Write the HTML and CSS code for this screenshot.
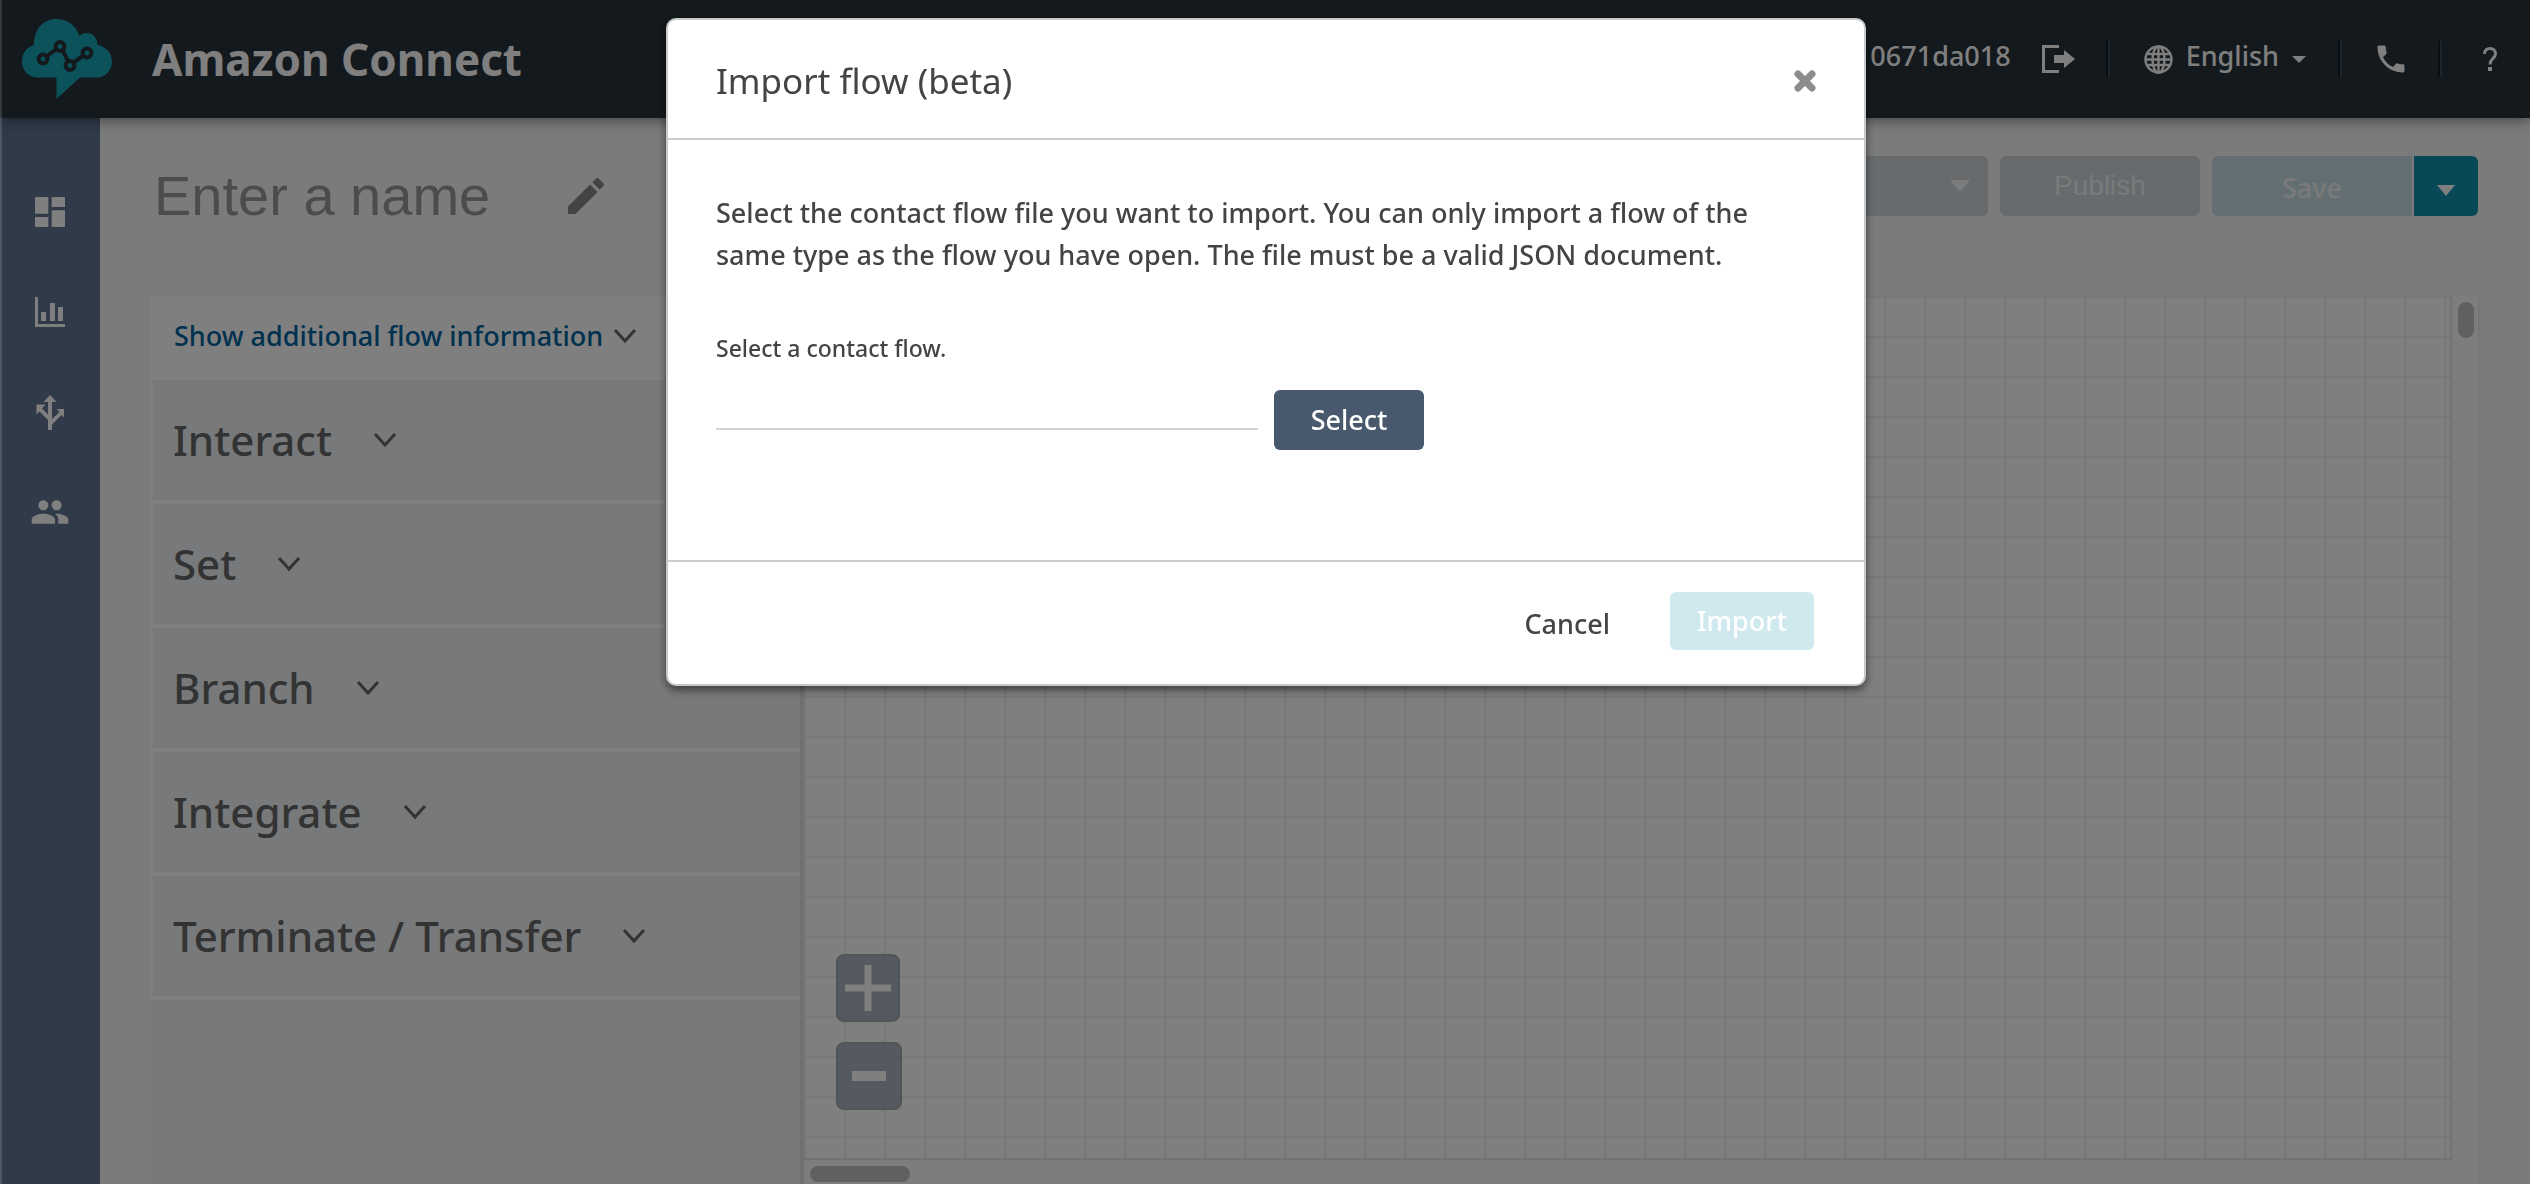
FILE: index.html
```
<!DOCTYPE html>
<html lang="en">
<head>
<meta charset="utf-8">
<title>Amazon Connect</title>
<link rel="stylesheet" href="styles.css">
</head>
<body>
<header class="topbar">
  <a class="brand" href="#">
    <svg class="brand-logo" viewBox="0 0 90 80" aria-hidden="true">
      <path fill="#18a4b4" d="M16 58.500C6 58.500 0 51 0 42.500C0 34 5 28 12 26C12 10 21 0 34.500 0C46 0 54.500 7 57.500 17C59.500 15 62 14 65 14C71 14 75 18.500 75.500 26C84 27.500 90 34 90 42.500C90 51 84 58.500 74 58.500H58L34.500 80V58.500Z"/>
      <g fill="none" stroke="#27323a" stroke-width="4">
        <path d="M24.500 37.500L34.500 30M40.500 31L46 42M51.500 43.500L61.500 36.500"/>
        <circle cx="21" cy="40" r="4.400"/><circle cx="38" cy="27.500" r="4.400"/><circle cx="48" cy="46.500" r="4.400"/><circle cx="65" cy="34" r="4.400"/>
      </g>
    </svg>
    <span class="brand-name">Amazon Connect</span>
  </a>
  <div class="top-group user">
    <span class="top-text">0671da018</span>
    <a href="#" aria-label="Log out"><svg width="33" height="28" viewBox="0 0 33 28"><path fill="none" stroke="#fff" stroke-width="3" d="M17 1.500H1.500V26.500H17"/><path fill="#fff" d="M12 10H22V5L33 14L22 23V18H12Z"/></svg></a>
  </div>
  <div class="top-group lang">
    <svg width="29" height="29" viewBox="0 0 29 29" fill="none" stroke="#fff" stroke-width="2.400"><circle cx="14.500" cy="14.500" r="13"/><ellipse cx="14.500" cy="14.500" rx="6" ry="13"/><path d="M14.500 1.500V27.500M1.500 14.500H27.500M3.500 9H25.500M3.500 20H25.500"/></svg>
    <button class="lang-button top-text" type="button">English</button>
    <svg width="14" height="7" viewBox="0 0 14 7"><path fill="#fff" d="M0 0H14L7 7Z"/></svg>
  </div>
  <div class="top-group phone">
    <a href="#" aria-label="Phone"><svg width="36" height="36" viewBox="0 0 24 24"><path fill="#fff" d="M6.620 10.790c1.440 2.830 3.760 5.140 6.590 6.590l2.200-2.200c.270-.270.670-.360 1.020-.240 1.120.370 2.330.570 3.570.570.550 0 1 .450 1 1V20c0 .550-.450 1-1 1-9.390 0-17-7.610-17-17 0-.550.450-1 1-1h3.500c.550 0 1 .450 1 1 0 1.250.200 2.450.570 3.570.110.350.030.740-.250 1.020l-2.200 2.200z"/></svg></a>
  </div>
  <div class="top-group help">
    <a href="#" aria-label="Help"><svg width="14" height="24" viewBox="0 0 14 24"><path fill="none" stroke="#fff" stroke-width="3" d="M1.500 7C1.500 3.500 3.800 1.500 7 1.500C10.200 1.500 12.500 3.500 12.500 6.800C12.500 11.500 7 11.500 7 17.500"/><path fill="#fff" d="M5 20h4v4H5z"/></svg></a>
  </div>
</header>

<div class="layout">
  <nav class="sidebar">
    <a href="#" aria-label="Dashboard"><svg viewBox="0 0 24 24"><path d="M3 13h8V3H3v10zm0 8h8v-6H3v6zm10 0h8V11h-8v10zm0-18v6h8V3h-8z"/></svg></a>
    <a href="#" aria-label="Metrics"><svg viewBox="0 0 40 40"><path d="M5 5h3v27h27v3H5zM11 20h5v9h-5zM20 11h5v18h-5zM28 15h5v14h-5z"/></svg></a>
    <a href="#" aria-label="Routing"><svg viewBox="0 0 40 40"><path d="M20 3L26.500 10H22V27L29.500 20L26.500 17H34V25.500L31.500 23L22 32.500V38H18V28L9.500 19.500L6.500 22.500V12.500H15.500L12 16.500L18 22.500V10H13.500Z"/></svg></a>
    <a href="#" aria-label="Users"><svg viewBox="0 0 24 24"><path d="M16 11c1.660 0 2.990-1.340 2.990-3S17.660 5 16 5c-1.660 0-3 1.340-3 3s1.340 3 3 3zm-8 0c1.660 0 2.990-1.340 2.990-3S9.660 5 8 5C6.340 5 5 6.340 5 8s1.340 3 3 3zm0 2c-2.330 0-7 1.170-7 3.500V19h14v-2.500c0-2.330-4.670-3.500-7-3.500zm8 0c-.290 0-.620.020-.970.050 1.160.840 1.970 1.970 1.970 3.450V19h6v-2.500c0-2.330-4.670-3.500-7-3.500z"/></svg></a>
  </nav>

  <main class="content">
    <div class="toolbar">
      <div class="flow-name">
        <input class="name-input" type="text" placeholder="Enter a name" aria-label="Flow name">
        <svg width="48" height="48" viewBox="0 0 24 24"><path fill="#888" d="M3 17.250V21h3.750L17.810 9.940l-3.750-3.750L3 17.250zM20.710 7.040c.390-.390.390-1.020 0-1.410l-2.340-2.340c-.390-.390-1.020-.390-1.410 0l-1.830 1.830 3.750 3.750 1.830-1.830z"/></svg>
      </div>
      <div class="actions">
        <button class="btn more" type="button" aria-label="More actions"><svg width="20" height="12" viewBox="0 0 20 12"><path fill="#f6f6f6" d="M0 0H20L10 12Z"/></svg></button>
        <button class="btn publish" type="button" disabled>Publish</button>
        <div class="save-group">
          <button class="btn save" type="button" disabled>Save</button>
          <button class="btn save-menu" type="button" aria-label="Save options"><svg width="18" height="11" viewBox="0 0 18 11"><path fill="#fff" d="M0 0H18L9 11Z"/></svg></button>
        </div>
      </div>
    </div>

    <div class="workspace">
      <aside class="palette">
        <div class="palette-head">
          <a href="#">Show additional flow information</a>
          <svg class="chevron" viewBox="0 0 24 16"><path d="M2 2L12 13L22 2"/></svg>
        </div>
        <ul class="palette-list">
          <li><button type="button">Interact<svg class="chevron" viewBox="0 0 24 16"><path d="M2 2L12 13L22 2"/></svg></button></li>
          <li><button type="button">Set<svg class="chevron" viewBox="0 0 24 16"><path d="M2 2L12 13L22 2"/></svg></button></li>
          <li><button type="button">Branch<svg class="chevron" viewBox="0 0 24 16"><path d="M2 2L12 13L22 2"/></svg></button></li>
          <li><button type="button">Integrate<svg class="chevron" viewBox="0 0 24 16"><path d="M2 2L12 13L22 2"/></svg></button></li>
          <li><button type="button">Terminate / Transfer<svg class="chevron" viewBox="0 0 24 16"><path d="M2 2L12 13L22 2"/></svg></button></li>
        </ul>
      </aside>
      <section class="stage">
        <div class="canvas">
          <div class="zoom">
            <button class="zoom-in" type="button" aria-label="Zoom in"><svg width="46" height="46" viewBox="0 0 46 46"><path stroke="#fff" stroke-width="7" d="M23 0V46M0 23H46"/></svg></button>
            <button class="zoom-out" type="button" aria-label="Zoom out"><svg width="34" height="10" viewBox="0 0 34 10"><path stroke="#fff" stroke-width="10" d="M0 5H34"/></svg></button>
          </div>
        </div>
        <div class="track-y"><div class="thumb-y"></div></div>
        <div class="track-x"><div class="thumb-x"></div></div>
      </section>
    </div>
  </main>
</div>

<div class="backdrop">
  <section class="modal" role="dialog" aria-modal="true" aria-labelledby="modal-title">
    <header class="modal-head">
      <h2 id="modal-title">Import flow (beta)</h2>
      <button class="close" type="button" aria-label="Close"><svg width="22" height="22" viewBox="0 0 22 22"><path stroke="#8c8c8c" stroke-width="7" stroke-linecap="round" d="M4 4L18 18M18 4L4 18"/></svg></button>
    </header>
    <div class="modal-body">
      <p>Select the contact flow file you want to import. You can only import a flow of the same type as the flow you have open. The file must be a valid JSON document.</p>
      <label for="flow-file">Select a contact flow.</label>
      <div class="file-row">
        <input id="flow-file" type="text" readonly>
        <button class="btn select" type="button">Select</button>
      </div>
    </div>
    <footer class="modal-foot">
      <button class="cancel" type="button">Cancel</button>
      <button class="btn import" type="button" disabled>Import</button>
    </footer>
  </section>
</div>
</body>
</html>
```
FILE: styles.css
```
* { box-sizing: border-box; }

body {
  margin: 0;
  min-height: 100vh;
  display: flex;
  flex-direction: column;
  background: #f6f6f6;
  color: #444;
  font: 500 27px/42px "Noto Sans", "Open Sans", sans-serif;
}

button, input { font: inherit; color: inherit; border: 0; background: none; padding: 0; margin: 0; }
a { color: inherit; text-decoration: none; }
svg { display: block; flex: none; }

/* Top bar */
.topbar {
  position: relative;
  z-index: 1;
  display: flex;
  align-items: center;
  height: 118px;
  padding-left: 22px;
  background: #27323a;
  color: #fff;
  box-shadow: 0 0 14px rgba(0, 0, 0, .6);
}
.brand { display: flex; align-items: center; gap: 40px; margin-right: auto; }
.brand-logo { width: 90px; height: 80px; }
.brand-name { font-size: 44px; font-weight: 700; line-height: 60px; }
.top-group { display: flex; align-items: center; height: 36px; }
.top-group + .top-group { border-left: 2px solid #3a4d5a; box-shadow: -2px 0 #151c20; }
.top-text { padding-bottom: 6px; }
.user { gap: 31px; padding-right: 33px; }
.lang { gap: 13px; padding: 0 34px; }
.phone { width: 100px; justify-content: center; }
.help { width: 90px; justify-content: center; padding-left: 8px; }

/* Side navigation */
.layout { flex: 1; display: flex; }
.sidebar {
  width: 100px;
  flex: none;
  display: flex;
  flex-direction: column;
  align-items: center;
  gap: 60px;
  padding-top: 74px;
  background: #607590;
}
.sidebar svg { width: 40px; height: 40px; fill: #fff; }

.content { flex: 1; display: flex; flex-direction: column; min-width: 0; padding-left: 50px; }

/* Flow toolbar */
.toolbar { display: flex; justify-content: space-between; padding: 38px 52px 60px 0; }
.flow-name { display: flex; align-items: center; height: 80px; }
.name-input { width: 412px; padding-left: 4px; font: 56px/74px "Liberation Sans", Arial, sans-serif; }
.name-input::placeholder { color: #999; opacity: 1; }
.actions { display: flex; gap: 12px; }
.btn { height: 60px; border-radius: 6px; color: #fff; text-align: center; }
.more { display: flex; align-items: center; justify-content: flex-end; width: 300px; padding-right: 18px; background: #ced7dc; }
.publish { width: 200px; background: #ced7dc; color: #f4f4f4; font: 28px "Liberation Sans", Arial, sans-serif; }
.save-group { display: flex; gap: 2px; }
.save { width: 200px; padding-top: 4px; border-radius: 6px 0 0 6px; background: #c6dee6; color: #f4f4f4; }
.save-menu { display: flex; align-items: center; justify-content: center; width: 64px; padding-top: 8px; border-radius: 0 6px 6px 0; background: #1090ae; }

/* Block palette */
.workspace { flex: 1; display: flex; padding-right: 50px; }
.palette { width: 650px; flex: none; background: #eef2f5; }
.palette-head { display: flex; align-items: center; gap: 10px; height: 84px; padding: 0 24px 4px; background: #fff; color: #00629c; }
.chevron { width: 24px; height: 16px; fill: none; stroke: #666; stroke-width: 3px; }
.palette-list { margin: 0; padding: 0 0 0 3px; list-style: none; background: #fff; }
.palette-list li { border-bottom: 4px solid #fff; background: #eef2f5; }
.palette-list button { display: flex; align-items: center; gap: 41px; width: 100%; height: 120px; padding-left: 20px; color: #666; font-size: 42px; line-height: 60px; }

/* Canvas with its scroll bars */
.stage { flex: 1; display: grid; grid-template: 1fr 24px / 1fr 28px; border-left: 4px solid #e0e0e0; background: #fbfbfb; }
.canvas {
  position: relative;
  border: solid #e6e6e6;
  border-width: 0 2px 2px 0;
  background: linear-gradient(#f1f1f1 2px, transparent 2px) 0 0 / 40px 40px,
    linear-gradient(90deg, #f1f1f1 2px, transparent 2px) 0 0 / 40px 40px, #fff;
}
.zoom { position: absolute; left: 32px; bottom: 48px; display: grid; gap: 20px; justify-items: start; }
.zoom button { display: grid; place-items: center; height: 68px; border: 2px solid #a0aab0; border-radius: 8px; background: rgba(136, 148, 165, .7); }
.zoom .zoom-in { width: 64px; }
.zoom .zoom-out { width: 66px; }
.track-y { grid-row: 1 / 3; grid-column: 2; border-right: 2px solid #efefef; padding: 6px 4px 0 6px; }
.thumb-y { width: 16px; height: 36px; border-radius: 8px; background: #c0c0c0; }
.track-x { grid-row: 2; grid-column: 1; padding: 6px 6px 0; }
.thumb-x { width: 100px; height: 16px; border-radius: 8px; background: #c0c0c0; }

/* Import dialog */
.backdrop {
  position: fixed;
  inset: 0;
  z-index: 2;
  display: flex;
  justify-content: center;
  align-items: flex-start;
  padding-top: 18px;
  border-left: 2px solid rgba(255, 255, 255, .14);
  background: rgba(0, 0, 0, .5);
}
.modal { width: 1200px; border: 2px solid #c6c8ca; border-radius: 10px; background: #fff; box-shadow: 0 4px 8px rgba(0, 0, 0, .5); }
.modal-head { display: flex; align-items: center; justify-content: space-between; height: 120px; padding: 4px 48px 0; border-bottom: 2px solid #ccc; }
.modal-head h2 { margin: 0; font-size: 35px; font-weight: 400; line-height: 48px; }
.modal-body { padding: 52px 50px 110px 48px; }
.modal-body p { margin: 0 0 56px; }
.modal-body label { display: block; margin-bottom: 26px; font-size: 23px; line-height: 32px; }
.file-row { display: flex; align-items: flex-start; gap: 16px; }
.file-row input { width: 542px; height: 40px; border-bottom: 2px solid #d5d5d5; }
.select { width: 150px; background: #48596d; }
.modal-foot { display: flex; justify-content: flex-end; align-items: center; gap: 60px; padding: 30px 50px 34px; border-top: 2px solid #ccc; }
.cancel { padding-top: 6px; }
.import { width: 144px; height: 58px; background: #d0e9ee; }
```
